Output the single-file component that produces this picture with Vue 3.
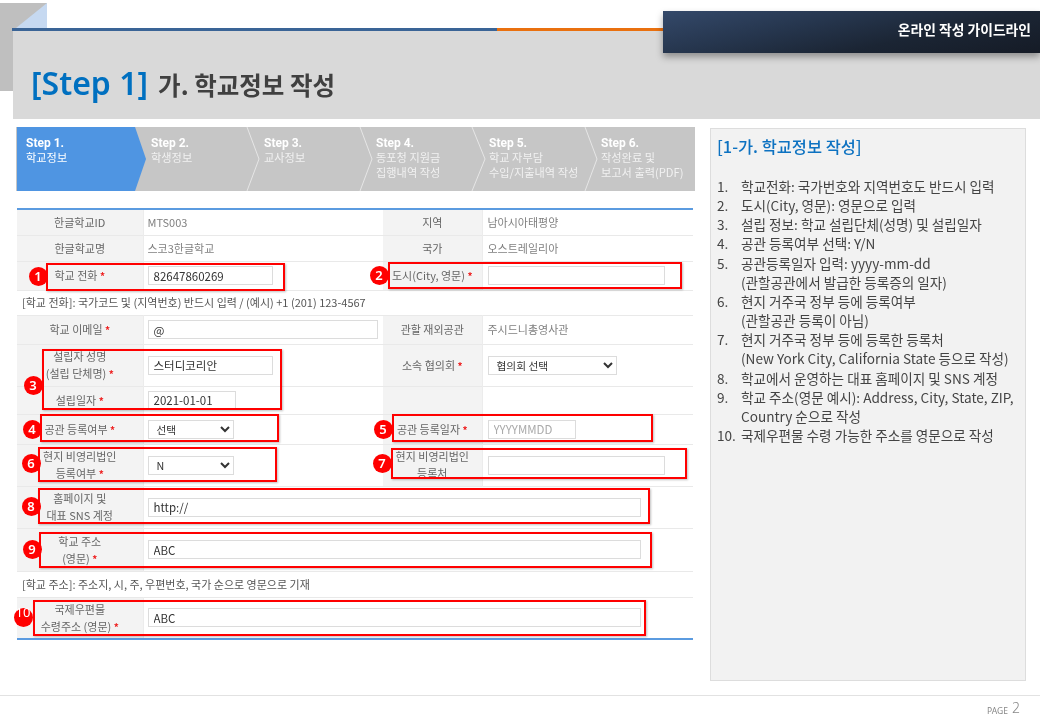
<script setup>
const F = '"Noto Sans CJK KR", "Noto Sans", sans-serif'
const steps = [
  { t: 'Step 1.', l: ['학교정보'], on: true },
  { t: 'Step 2.', l: ['학생정보'] },
  { t: 'Step 3.', l: ['교사정보'] },
  { t: 'Step 4.', l: ['동포청 지원금', '집행내역 작성'] },
  { t: 'Step 5.', l: ['학교 자부담', '수입/지출내역 작성'] },
  { t: 'Step 6.', l: ['작성완료 및', '보고서 출력(PDF)'] }
]
const guide = [
  ['학교전화: 국가번호와 지역번호도 반드시 입력'],
  ['도시(City, 영문): 영문으로 입력'],
  ['설립 정보: 학교 설립단체(성명) 및 설립일자'],
  ['공관 등록여부 선택: Y/N'],
  ['공관등록일자 입력: yyyy-mm-dd', '(관할공관에서 발급한 등록증의 일자)'],
  ['현지 거주국 정부 등에 등록여부', '(관할공관 등록이 아님)'],
  ['현지 거주국 정부 등에 등록한 등록처', '(New York City, California State 등으로 작성)'],
  ['학교에서 운영하는 대표 홈페이지 및 SNS 계정'],
  ['학교 주소(영문 예시): Address, City, State, ZIP,', 'Country 순으로 작성'],
  ['국제우편물 수령 가능한 주소를 영문으로 작성']
]
const boxes = [
  [46, 263, 285, 291], [388, 262, 682, 289], [42, 349, 282, 410], [40, 414, 279, 442],
  [392, 414, 653, 442], [38, 447, 277, 482], [391, 448, 687, 479], [38, 488, 650, 524],
  [39, 532, 652, 568], [33, 600, 646, 636]
]
const badges = [
  [38, 276], [379, 275], [33, 385], [32, 429], [383, 429],
  [31, 463], [382, 463], [31, 506], [32, 549], [23, 617]
]
function boxStyle(b) {
  return { left: b[0] + 'px', top: b[1] + 'px', width: b[2] - b[0] + 'px', height: b[3] - b[1] + 'px' }
}
function badgeStyle(b) {
  return { left: b[0] - 9.5 + 'px', top: b[1] - 9.5 + 'px' }
}
</script>

<template>
  <div class="page" :style="{ fontFamily: F }">
    <svg class="corner" width="47" height="88" viewBox="0 0 47 88">
      <rect width="47" height="88" fill="#bfbfbf" />
      <polygon points="47,0 47,25 16,25" fill="#c6d9f1" />
    </svg>

    <header class="head">
      <div class="rule"><i class="blue"></i><i class="orange"></i></div>
      <h1 class="title"><span class="step">[Step 1]</span><span class="sub">가. 학교정보 작성</span></h1>
    </header>
    <div class="guideBar">온라인 작성 가이드라인</div>

    <main class="main">
      <section class="left">
        <nav class="steps">
          <svg class="chev" width="679" height="64" viewBox="0 0 679 64">
            <polygon points="1,0 119,0 130,32 119,64 1,64" fill="#4f95e2" />
            <g fill="none" stroke="#e6e6e6" stroke-width="1">
              <polyline points="231,0 243,32 231,64" />
              <polyline points="344,0 356,32 344,64" />
              <polyline points="456,0 469,32 456,64" />
              <polyline points="569,0 581,32 569,64" />
            </g>
          </svg>
          <div v-for="s in steps" :key="s.t" class="stepItem" :class="{ on: s.on }">
            <b>{{ s.t }}</b>
            <span v-for="x in s.l" :key="x">{{ x }}</span>
          </div>
        </nav>

        <table class="form">
          <colgroup><col class="c1" /><col class="c2" /><col class="c3" /><col class="c4" /></colgroup>
          <tbody>
            <tr class="h26">
              <th>한글학교ID</th><td class="ro">MTS003</td>
              <th>지역</th><td class="ro">남아시아태평양</td>
            </tr>
            <tr class="h26">
              <th>한글학교명</th><td class="ro">스코3한글학교</td>
              <th>국가</th><td class="ro">오스트레일리아</td>
            </tr>
            <tr class="h29">
              <th>학교 전화 <em>*</em></th><td><input class="w125" value="82647860269" /></td>
              <th>도시(City, 영문) <em>*</em></th><td><input class="w177" /></td>
            </tr>
            <tr class="note h25">
              <td colspan="4">[학교 전화]: 국가코드 및 (지역번호) 반드시 입력 / (예시) +1 (201) 123-4567</td>
            </tr>
            <tr class="h29">
              <th>학교 이메일 <em>*</em></th><td><input class="w230" value="@" /></td>
              <th>관할 재외공관</th><td class="ro">주시드니총영사관</td>
            </tr>
            <tr class="h42">
              <th>설립자 성명<br />(설립 단체명) <em>*</em></th><td><input class="w125" value="스터디코리안" /></td>
              <th>소속 협의회 <em>*</em></th>
              <td><select class="w129"><option>협의회 선택</option></select></td>
            </tr>
            <tr class="h28">
              <th>설립일자 <em>*</em></th><td><input class="w88" value="2021-01-01" /></td>
              <th></th><td></td>
            </tr>
            <tr class="h30">
              <th>공관 등록여부 <em>*</em></th>
              <td><select class="w86"><option>선택</option></select></td>
              <th>공관 등록일자 <em>*</em></th><td><input class="w88" placeholder="YYYYMMDD" /></td>
            </tr>
            <tr class="h42">
              <th>현지 비영리법인<br />등록여부 <em>*</em></th>
              <td><select class="w86"><option>N</option></select></td>
              <th>현지 비영리법인<br />등록처</th><td><input class="w177" /></td>
            </tr>
            <tr class="h42">
              <th>홈페이지 및<br />대표 SNS 계정</th>
              <td colspan="3"><input class="w493" value="http://" /></td>
            </tr>
            <tr class="h43">
              <th>학교 주소<br />(영문) <em>*</em></th>
              <td colspan="3"><input class="w493" value="ABC" /></td>
            </tr>
            <tr class="note h26">
              <td colspan="4">[학교 주소]: 주소지, 시, 주, 우편번호, 국가 순으로 영문으로 기재</td>
            </tr>
            <tr class="h42 last">
              <th>국제우편물<br />수령주소 (영문) <em>*</em></th>
              <td colspan="3"><input class="w493" value="ABC" /></td>
            </tr>
          </tbody>
        </table>
      </section>

      <aside class="panel">
        <h2>[1-가. 학교정보 작성]</h2>
        <ol>
          <li v-for="(g, i) in guide" :key="i">
            <span class="num">{{ i + 1 }}.</span>
            <div><div v-for="x in g" :key="x">{{ x }}</div></div>
          </li>
        </ol>
      </aside>
    </main>

    <footer class="foot"><small>PAGE</small><span>2</span></footer>

    <div v-for="(b, i) in boxes" :key="'b' + i" class="mark" :style="boxStyle(b)"></div>
    <div v-for="(b, i) in badges" :key="'n' + i" class="badge" :class="{ ten: i === 9 }" :style="badgeStyle(b)">
      <span>{{ i + 1 }}</span>
    </div>
  </div>
</template>

<style scoped>
.page { position: relative; width: 1040px; height: 720px; overflow: hidden; background: #fff; color: #555; filter: blur(0.3px); }
.corner { position: absolute; left: 0; top: 3px; }
.head { position: relative; margin: 28px 0 0 13px; height: 91px; background: #d9d9d9; }
.rule { display: flex; height: 3px; margin-left: -1px; }
.rule .blue { width: 485px; background: #3a6496; }
.rule .orange { flex: 1; background: #e9700f; }
.title { margin: 0; padding: 27px 0 0 18px; display: flex; align-items: baseline; font-weight: 400; height: 50px; }
.step { font-family: "Noto Sans", sans-serif; font-size: 32px; line-height: 50px; font-weight: 600; color: #0070c0; }
.sub { margin-left: 10px; font-size: 24.5px; font-weight: 700; color: #404040; }
.guideBar {
  position: absolute; left: 663px; top: 11px; width: 377px; height: 42px; box-sizing: border-box;
  padding-right: 9px; text-align: right; line-height: 36px; font-size: 13.8px; font-weight: 700; color: #fff;
  background: linear-gradient(168deg, #34496a 0%, #26364e 35%, #1b2534 65%, #151b26 100%);
  box-shadow: 0 4px 7px rgba(0, 0, 0, .35);
}
.main { display: flex; gap: 15px; padding: 8px 14px 0 16px; }
.left { width: 679px; }
.steps {
  position: relative; display: grid; grid-template-columns: 135px 113px 112px 113px 112px 1fr;
  height: 64px; background: #c6c6c6; color: #f1f1f1; font-size: 11.2px; line-height: 14.5px;
}
.chev { position: absolute; left: 0; top: 0; }
.stepItem { position: relative; display: flex; flex-direction: column; padding-top: 9px; white-space: nowrap; }
.stepItem span { position: relative; top: -0.5px; }
.stepItem:first-of-type, .stepItem.on { padding-left: 10px; color: #fff; }
.stepItem b { font-family: Roboto, sans-serif; font-size: 12px; font-weight: 700; color: #fff; }
.form { margin: 17px 0 0 1px; width: 676px; table-layout: fixed; border-collapse: collapse; border-top: 2px solid #5b9be0; border-bottom: 2px solid #5b9be0; font-size: 11px; }
.c1 { width: 126px; } .c2 { width: 240px; } .c3 { width: 99px; } .c4 { width: 211px; }
tr { border-bottom: 1px solid #e9e9e9; }
tr.last { border-bottom: 0; }
.h25 { height: 25px; } .h26 { height: 26px; } .h28 { height: 28px; } .h29 { height: 29px; }
.h30 { height: 30px; } .h42 { height: 42px; } .h43 { height: 43px; }
th { padding: 0; background: #f3f3f3; font-weight: 400; color: #666; line-height: 17px; text-align: center; border-right: 1px solid #ececec; }
td { padding: 0 0 0 5px; line-height: 17px; }
th + td { padding-left: 4px; }
th + td + th + td { padding-left: 5px; }
td.ro { color: #808080; }
em { font-style: normal; font-size: 10px; font-weight: 700; color: #ee2222; }
.note td { padding-left: 5px; color: #555; }
input, select { display: block; box-sizing: border-box; height: 19px; border: 1px solid #dcdcdc; outline: 0; margin: 0; background: #fff; color: #333; font: 11.5px/17px "Noto Sans CJK KR", "Noto Sans", sans-serif; padding: 0 5px; }
select { padding-left: 4px; border-radius: 0; font-size: 10.7px; }
input::placeholder { color: #aaa; }
.w88 { width: 88px; } .w86 { width: 86px; } .w125 { width: 125px; } .w129 { width: 129px; }
.w177 { width: 177px; } .w230 { width: 230px; } .w493 { width: 493px; }
.panel { box-sizing: border-box; width: 316px; height: 553px; margin-top: 1px; padding: 5px 6px 0; background: #f2f2f2; border: 1px solid #ddd; color: #444; }
.panel h2 { margin: 0 0 19px; font-size: 16.4px; line-height: 24px; font-weight: 500; color: #0d72c1; }
.panel ol { margin: 0; padding: 0; list-style: none; font-size: 13.6px; line-height: 19.15px; white-space: nowrap; }
.panel li { display: flex; }
.num { flex: none; width: 24px; }
.foot { position: absolute; left: 0; right: 0; top: 695px; height: 25px; box-sizing: border-box; border-top: 1px solid #e2e2e2; display: flex; justify-content: flex-end; align-items: center; gap: 4px; padding-right: 20px; color: #888; }
.foot small { font-family: "Noto Sans", sans-serif; font-size: 8.5px; line-height: 22px; padding-top: 5px; }
.foot span { font-family: "Noto Sans", sans-serif; font-size: 14px; font-weight: 300; line-height: 22px; }
.mark { position: absolute; box-sizing: border-box; border: 2px solid #f00; box-shadow: 1px 1px 2px rgba(0, 0, 0, .25); }
.badge { position: absolute; width: 19px; height: 19px; border-radius: 50%; background: #f00; color: #fff; display: flex; align-items: center; justify-content: center; font-family: "Noto Sans", sans-serif; font-size: 13px; font-weight: 600; line-height: 19px; }
.badge.ten { font-size: 13px; font-weight: 400; }
.badge.ten span { margin-top: -9px; }
</style>

<style>
html, body { margin: 0; background: #fff; }
</style>
